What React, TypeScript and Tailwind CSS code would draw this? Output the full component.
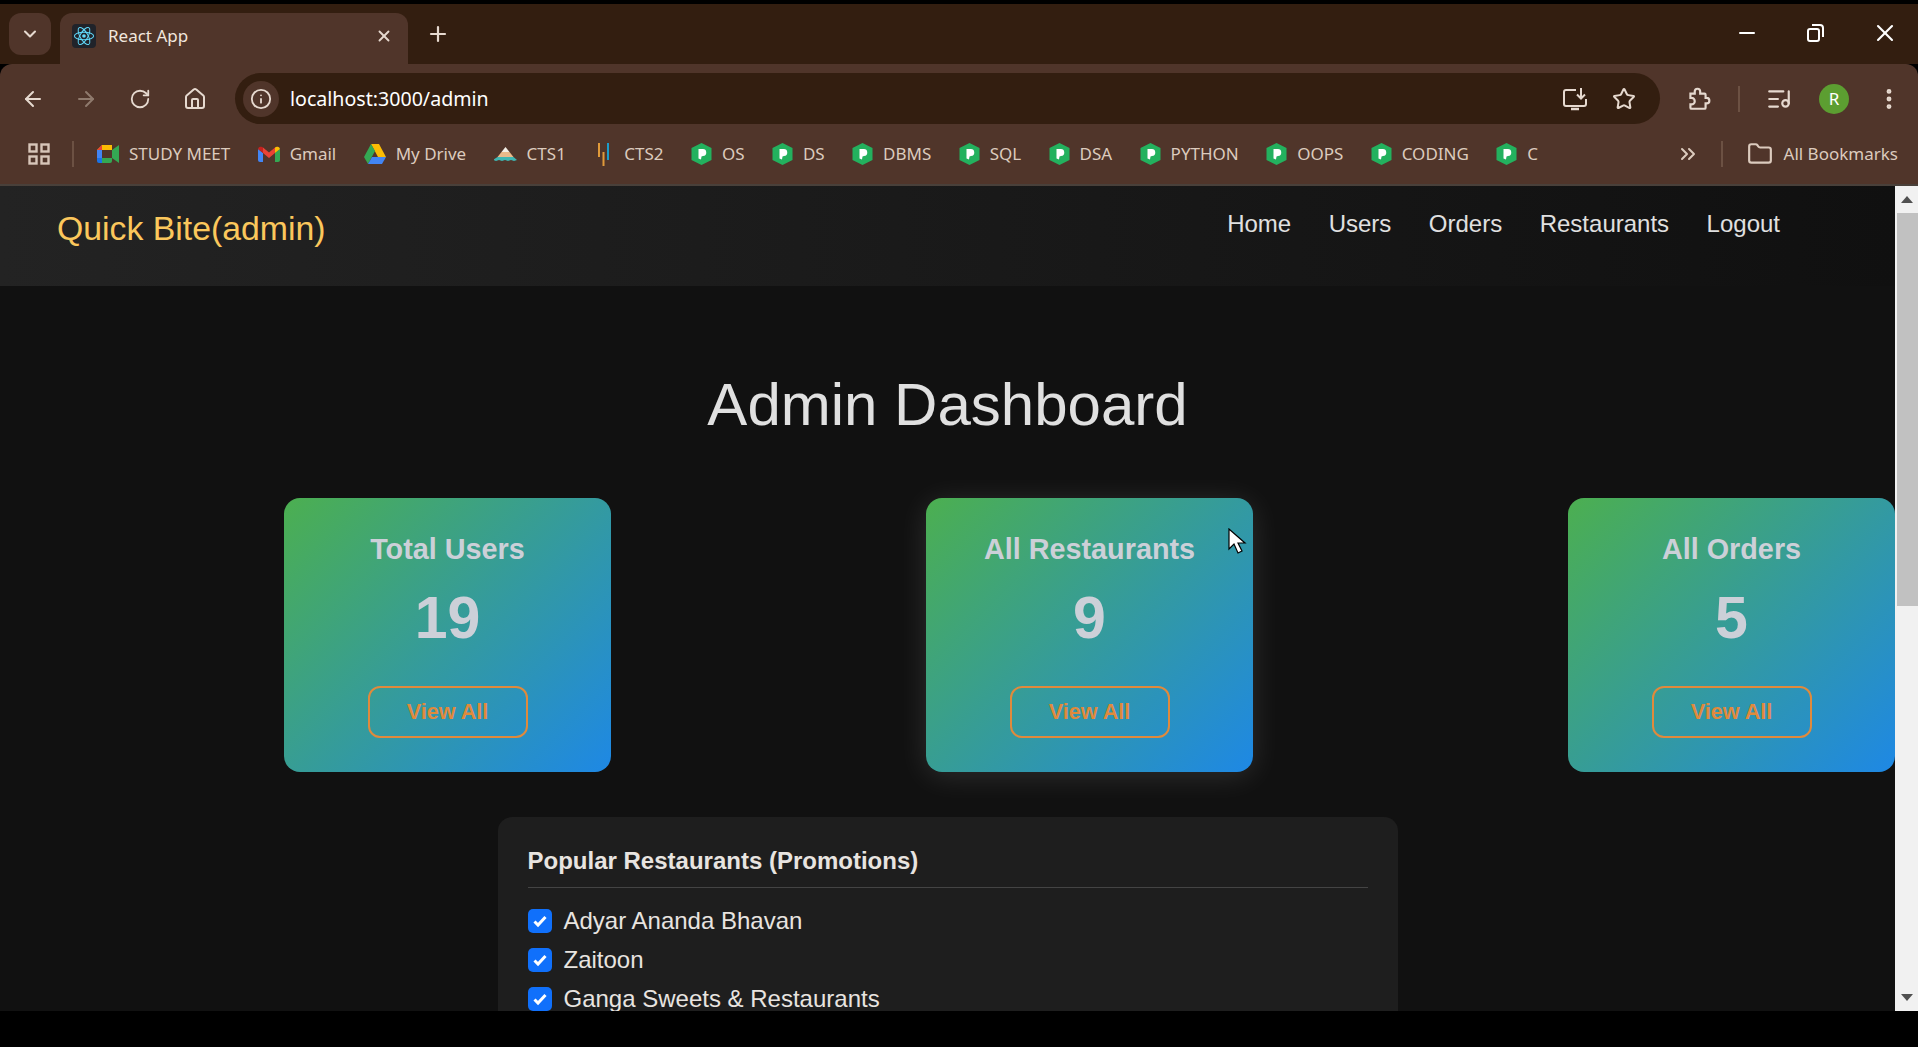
import {
  ArrowLeft,
  ArrowRight,
  ChevronDown,
  ChevronsRight,
  Folder,
  House,
  Info,
  ListMusic,
  Minus,
  MoreVertical,
  Plus,
  RotateCw,
  Star,
  X,
} from 'lucide-react';

const sans = "font-['Liberation_Sans',Arial,sans-serif]";

function ReactIcon() {
  return (
    <div className="w-6 h-6 rounded bg-[#20232a] flex items-center justify-center">
      <svg width="22" height="22" viewBox="-12 -12 24 24" fill="none" stroke="#61dafb" strokeWidth="1.1">
        <circle r="2" fill="#61dafb" stroke="none" />
        <ellipse rx="10.5" ry="4.2" />
        <ellipse rx="10.5" ry="4.2" transform="rotate(60)" />
        <ellipse rx="10.5" ry="4.2" transform="rotate(120)" />
      </svg>
    </div>
  );
}

function MeetIcon() {
  return (
    <svg width="22" height="18" viewBox="0 0 22 18">
      <path d="M5 0h10v5H5v2H0V5z" fill="#fbbc04" />
      <path d="M5 0v5H0z" fill="#ea4335" />
      <path d="M0 5h5v8H0z" fill="#4285f4" />
      <path d="M0 13h5v5H2a2 2 0 0 1-2-2z" fill="#1a73e8" />
      <path d="M5 13h10v3a2 2 0 0 1-2 2H5z" fill="#34a853" />
      <path d="M15 5v8l7 5V0z" fill="#34a853" />
      <path d="M13 0a2 2 0 0 1 2 2v3h-2z" fill="#fbbc04" />
    </svg>
  );
}

function GmailIcon() {
  return (
    <svg width="22" height="16" viewBox="0 0 22 16">
      <path d="M0 3v11a2 2 0 0 0 2 2h3V7z" fill="#4285f4" />
      <path d="M17 7v9h3a2 2 0 0 0 2-2V3z" fill="#34a853" />
      <path d="M5 7l6 5 6-5V1.500l-6 5-6-5z" fill="#ea4335" />
      <path d="M0 3a3 3 0 0 1 5-1.500V7L0 3z" fill="#c5221f" />
      <path d="M22 3a3 3 0 0 0-5-1.500V7l5-4z" fill="#fbbc04" />
    </svg>
  );
}

function DriveIcon() {
  return (
    <svg width="22" height="20" viewBox="0 0 22 20">
      <path d="M7 0h8l7 13h-8z" fill="#fbbc04" />
      <path d="M7 0L0 13l4 7 7-13z" fill="#34a853" />
      <path d="M4 20h14l4-7H8z" fill="#4285f4" />
    </svg>
  );
}

function Cts1Icon() {
  return (
    <svg width="23" height="14" viewBox="0 0 23 14">
      <path d="M11.500 0l4 5h-8z" fill="#f3efe6" />
      <path d="M7.500 5h8l4 5H3.500z" fill="#e9b98a" />
      <path d="M3.500 10h16l3.500 3-3 1-3-1-3 1-3-1-3 1-3-1-3 1-3-1z" fill="#3fb6b2" />
    </svg>
  );
}

function Cts2Icon() {
  return (
    <div className="w-[21px] flex justify-center">
      <svg width="11" height="23" viewBox="0 0 11 23">
        <rect x="0" y="0" width="2" height="14" fill="#e09a3a" />
        <rect x="4.500" y="9" width="2" height="14" fill="#e09a3a" />
        <rect x="9" y="0" width="2" height="17" fill="#1c9cc9" />
      </svg>
    </div>
  );
}

function PIcon() {
  return (
    <svg width="21" height="22" viewBox="0 0 21 22">
      <path d="M10.500 0L20.500 5v12l-10 5-10-5V5z" fill="#23b15e" />
      <path d="M7.500 6h4a3.500 3.500 0 0 1 .5 7l-1.500 .5-.5 3-2.500-1z" fill="#fff" />
    </svg>
  );
}

function InstallIcon() {
  return (
    <svg width="26" height="26" viewBox="0 0 26 26" fill="none" stroke="currentColor" strokeWidth="2">
      <path d="M14 4H4a2 2 0 0 0-2 2v12a2 2 0 0 0 2 2h18a2 2 0 0 0 2-2v-5" />
      <path d="M9 23h8" strokeWidth="2.500" />
      <path d="M19 2v10M15 8.500l4 4 4-4" />
    </svg>
  );
}

function ExtensionIcon() {
  return (
    <svg width="26" height="26" viewBox="0 0 24 24" fill="none" stroke="currentColor" strokeWidth="2">
      <path d="M5 7h4V5a2.500 2.500 0 0 1 5 0v2h4a1 1 0 0 1 1 1v3h1a2.500 2.500 0 0 1 0 5h-1v4a1 1 0 0 1-1 1H6a1 1 0 0 1-1-1v-3h1a3 3 0 0 0 0-6H5z" />
    </svg>
  );
}

const bookmarks = [
  { label: 'STUDY MEET', icon: <MeetIcon /> },
  { label: 'Gmail', icon: <GmailIcon /> },
  { label: 'My Drive', icon: <DriveIcon /> },
  { label: 'CTS1', icon: <Cts1Icon /> },
  { label: 'CTS2', icon: <Cts2Icon /> },
  { label: 'OS', icon: <PIcon /> },
  { label: 'DS', icon: <PIcon /> },
  { label: 'DBMS', icon: <PIcon /> },
  { label: 'SQL', icon: <PIcon /> },
  { label: 'DSA', icon: <PIcon /> },
  { label: 'PYTHON', icon: <PIcon /> },
  { label: 'OOPS', icon: <PIcon /> },
  { label: 'CODING', icon: <PIcon /> },
  { label: 'C', icon: <PIcon /> },
];

const stats = [
  { title: 'Total Users', value: '19', glow: false },
  { title: 'All Restaurants', value: '9', glow: true },
  { title: 'All Orders', value: '5', glow: false },
];

const popular = ['Adyar Ananda Bhavan', 'Zaitoon', 'Ganga Sweets & Restaurants'];

function BrowserChrome() {
  return (
    <div className="font-['Noto_Sans',sans-serif] text-[#e6d9cf]">
      {/* Tab strip */}
      <div className="h-[60px] bg-[#331e10] flex items-end pl-[9px]">
        <div className="w-[42px] h-[42px] mb-[9px] rounded-xl bg-[#50352a] flex items-center justify-center">
          <ChevronDown className="w-5 h-5" strokeWidth={2.5} />
        </div>
        <div className="ml-[9px] w-[348px] h-[51px] rounded-t-xl bg-[#50352a] flex items-center pl-3 pb-[5px]">
          <ReactIcon />
          <span className="ml-3 text-[17px] text-[#f0e6dd]">React App</span>
          <X className="ml-auto mr-[15px] w-[18px] h-[18px]" strokeWidth={2.5} />
        </div>
        <Plus className="ml-[18px] mb-[18px] w-6 h-6" strokeWidth={2.2} />
        <div className="ml-auto flex items-center gap-[44px] pr-[19px] mb-[17px] text-white">
          <Minus className="w-6 h-6" strokeWidth={2} />
          <svg width="24" height="24" viewBox="0 0 24 24" fill="none" stroke="currentColor" strokeWidth="2">
            <rect x="5" y="8" width="11" height="12" rx="2" />
            <path d="M9 4h8a3 3 0 0 1 3 3v9" />
          </svg>
          <X className="w-7 h-7" strokeWidth={1.8} />
        </div>
      </div>

      {/* Toolbar */}
      <div className="h-[60px] bg-[#50352a] flex items-center pl-[21px] pt-[9px] rounded-t-xl">
        <ArrowLeft className="w-6 h-6" strokeWidth={2} />
        <ArrowRight className="ml-[29px] w-6 h-6 text-[#8f7a6d]" strokeWidth={2} />
        <RotateCw className="ml-[31px] w-[22px] h-[22px]" strokeWidth={2} />
        <House className="ml-[32px] w-6 h-6" strokeWidth={2} />
        <div className="ml-[28px] w-[1425px] h-[51px] rounded-full bg-[#331e10] flex items-center pl-2 pr-[24px]">
          <div className="w-[36px] h-[36px] rounded-full bg-[#50352a] flex items-center justify-center">
            <Info className="w-[22px] h-[22px]" strokeWidth={2} />
          </div>
          <span className="ml-[11px] text-[19.600px] text-white">localhost:3000/admin</span>
          <div className="ml-auto mr-[2px]">
            <InstallIcon />
          </div>
          <Star className="ml-[22px] w-[24px] h-[24px]" strokeWidth={2} />
        </div>
        <div className="ml-[25px]">
          <ExtensionIcon />
        </div>
        <div className="ml-[27px] w-[2px] h-[26px] bg-[#6c5143]" />
        <ListMusic className="ml-[26px] w-[26px] h-[26px]" strokeWidth={2} />
        <div className="ml-[27px] w-[30px] h-[30px] rounded-full bg-[#5c9e31] text-white text-[17px] flex items-center justify-center">
          R
        </div>
        <MoreVertical className="ml-[27px] w-[26px] h-[26px]" strokeWidth={2.5} />
      </div>

      {/* Bookmarks */}
      <div className="h-[62px] bg-[#50352a] border-b-2 border-[#49403a] flex items-center pl-[28px] text-[17px] text-[#dccbbe]">
        <svg width="22" height="22" viewBox="0 0 22 22" fill="none" stroke="#d8c6b9" strokeWidth="2.4">
          <rect x="1.500" y="1.500" width="7" height="7" />
          <rect x="13.500" y="1.500" width="7" height="7" />
          <rect x="1.500" y="13.500" width="7" height="7" />
          <rect x="13.500" y="13.500" width="7" height="7" />
        </svg>
        <div className="ml-[22px] mr-[23px] w-[2px] h-[26px] bg-[#6c5143]" />
        <div className="flex items-center gap-[27.400px]">
          {bookmarks.map((b) => (
            <div key={b.label} className="flex items-center gap-[10px]">
              {b.icon}
              <span>{b.label}</span>
            </div>
          ))}
        </div>
        <ChevronsRight className="ml-auto w-6 h-6" strokeWidth={2} />
        <div className="ml-[21px] mr-[24px] w-[2px] h-[26px] bg-[#6c5143]" />
        <Folder className="w-[26px] h-[26px]" strokeWidth={2} />
        <span className="ml-[11px] mr-[20px]">All Bookmarks</span>
      </div>
    </div>
  );
}

function StatCard({ title, value, glow }: { title: string; value: string; glow: boolean }) {
  return (
    <div
      className={`w-[327px] h-[274px] shrink-0 rounded-[16px] bg-[linear-gradient(135deg,#4caf50,#1e88e5)] flex flex-col items-center pt-[34px] text-[#ccd0d8] ${
        glow ? 'shadow-[0_4px_30px_rgba(255,255,255,0.12)]' : ''
      }`}
    >
      <h3 className="text-[28.800px] leading-[34px] font-bold">{title}</h3>
      <p className="mt-[17px] text-[59px] leading-[70px] font-bold">{value}</p>
      <button className="mt-[33px] w-[160px] h-[52px] rounded-[12px] border-2 border-[#e08a3c] text-[21.600px] font-bold text-[#e08a3c]">
        View All
      </button>
    </div>
  );
}

function Scrollbar() {
  return (
    <div className="w-[23px] shrink-0 bg-[#f1f1f1] flex flex-col items-center">
      <div className="h-[27px] flex items-center justify-center">
        <div className="w-0 h-0 border-x-[6px] border-x-transparent border-b-[7px] border-b-[#505050]" />
      </div>
      <div className="w-[21px] ml-[2px] h-[393px] bg-[#c1c1c1]" />
      <div className="mt-auto h-[27px] flex items-center justify-center">
        <div className="w-0 h-0 border-x-[6px] border-x-transparent border-t-[7px] border-t-[#505050]" />
      </div>
    </div>
  );
}

export default function App() {
  return (
    <div className={`relative w-[1918px] h-[1047px] overflow-hidden bg-black pt-1 flex flex-col ${sans}`}>
      <BrowserChrome />

      <div className="h-[825px] flex bg-[#111]">
        <div className="flex-1 min-w-0 overflow-hidden">
          {/* Navbar */}
          <header className="h-[100px] bg-[linear-gradient(90deg,#232323,#101010)] flex items-start pl-[57px] pr-[115px]">
            <span className="mt-[21px] text-[33.800px] leading-[42px] text-[#fbc75c]">Quick Bite(admin)</span>
            <nav className="ml-auto mt-[24px] flex gap-[37.500px] text-[24px] leading-[28px] text-[#e0e0e0]">
              <a>Home</a>
              <a>Users</a>
              <a>Orders</a>
              <a>Restaurants</a>
              <a>Logout</a>
            </nav>
          </header>

          <main>
            <h1 className="mt-[84px] text-center text-[60px] leading-[69px] text-[#e0e0e0]">Admin Dashboard</h1>

            <div className="mt-[59px] pl-[284px] flex gap-[315px]">
              {stats.map((s) => (
                <StatCard key={s.title} {...s} />
              ))}
            </div>

            <section className="mt-[45px] mx-auto w-[900px] rounded-[14px] bg-[#1e1e1e] px-[30px] pt-[26px] pb-[30px] text-[#e8e4e0]">
              <h2 className="text-[24px] leading-[36px] font-bold pb-[8px] border-b border-[#444]">
                Popular Restaurants (Promotions)
              </h2>
              <ul className="mt-[18px] flex flex-col gap-[9px]">
                {popular.map((name) => (
                  <li key={name} className="flex items-center gap-[12px] text-[24px] leading-[30px]">
                    <span className="w-6 h-6 rounded-[5px] bg-[#1070fb] flex items-center justify-center">
                      <svg width="16" height="16" viewBox="0 0 16 16" fill="none" stroke="#fff" strokeWidth="3">
                        <path d="M2.500 8.500l3.500 3.500 7.500-8" />
                      </svg>
                    </span>
                    {name}
                  </li>
                ))}
              </ul>
            </section>
          </main>
        </div>
        <Scrollbar />
      </div>

      {/* Mouse pointer */}
      <svg className="absolute left-[1228px] top-[528px]" width="20" height="28" viewBox="0 0 20 28">
        <path d="M1 1v20l5-5 4 9 4-2-4-8h7z" fill="#fff" stroke="#000" strokeWidth="1.200" />
      </svg>
    </div>
  );
}
